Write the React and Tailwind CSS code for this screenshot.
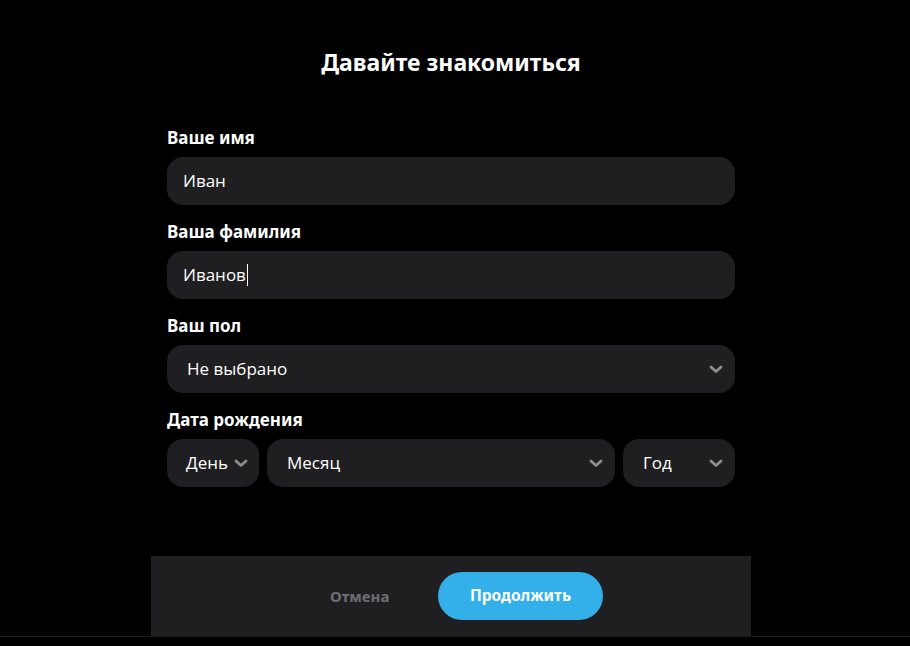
import React from "react";

const Chevron = () => (
  <svg width="14" height="9" viewBox="0 0 14 9" className="shrink-0">
    <path d="M2 2 L7 6.5 L12 2" fill="none" stroke="#8e8e93" strokeWidth="2.8" strokeLinecap="round" strokeLinejoin="round" />
  </svg>
);

const Label = ({ children }) => (
  <div className="text-[17px] font-bold text-white leading-5 mb-[9px]" style={{ fontFamily: "'Noto Sans', sans-serif" }}>
    {children}
  </div>
);

const inputFont = { fontFamily: "'Open Sans', 'Noto Sans', sans-serif" };

const Select = ({ text, className = "" }) => (
  <div className={`h-12 rounded-2xl bg-[#1f1f21] flex items-center justify-between pl-5 pr-3 ${className}`}>
    <span className="text-[17px] text-white" style={inputFont}>{text}</span>
    <Chevron />
  </div>
);

export default function App() {
  return (
    <div className="w-[910px] h-[646px] bg-black flex flex-col overflow-hidden">
      <div className="w-[600px] h-[636px] ml-[151px] flex flex-col">
        <h1 className="text-center text-white font-bold text-[23px] leading-7 mt-[48px]" style={{ fontFamily: "'Noto Sans', sans-serif" }}>
          Давайте знакомиться
        </h1>
        <div className="px-4 mt-[52px] flex flex-col">
          <Label>Ваше имя</Label>
          <div className="h-12 rounded-2xl bg-[#1f1f21] flex items-center px-4">
            <span className="text-[17px] text-white" style={inputFont}>Иван</span>
          </div>
          <div className="mt-[17px]"><Label>Ваша фамилия</Label></div>
          <div className="h-12 rounded-2xl bg-[#1f1f21] flex items-center px-4">
            <span className="text-[17px] text-white" style={inputFont}>Иванов</span>
            <span className="w-px h-[22px] bg-white ml-px" />
          </div>
          <div className="mt-[17px]"><Label>Ваш пол</Label></div>
          <Select text="Не выбрано" />
          <div className="mt-[17px]"><Label>Дата рождения</Label></div>
          <div className="flex gap-2">
            <Select text="День" className="w-[92px] pl-[19px] pr-[11px]" />
            <Select text="Месяц" className="flex-1" />
            <Select text="Год" className="w-[112px]" />
          </div>
        </div>
        <div className="mt-auto h-[80px] bg-[#1f1f21] flex items-center pl-[179px] gap-[49px]">
          <span className="text-[15px] font-bold text-[#6e6e72] w-[59px] text-center" style={{ fontFamily: "'Noto Sans', sans-serif" }}>Отмена</span>
          <button className="w-[165px] h-12 rounded-full bg-[#33afea] text-white text-[15.5px] font-bold" style={{ fontFamily: "'Noto Sans', sans-serif" }}>
            Продолжить
          </button>
        </div>
      </div>
      <div className="w-full h-px bg-[#1c1c1e]" />
    </div>
  );
}
